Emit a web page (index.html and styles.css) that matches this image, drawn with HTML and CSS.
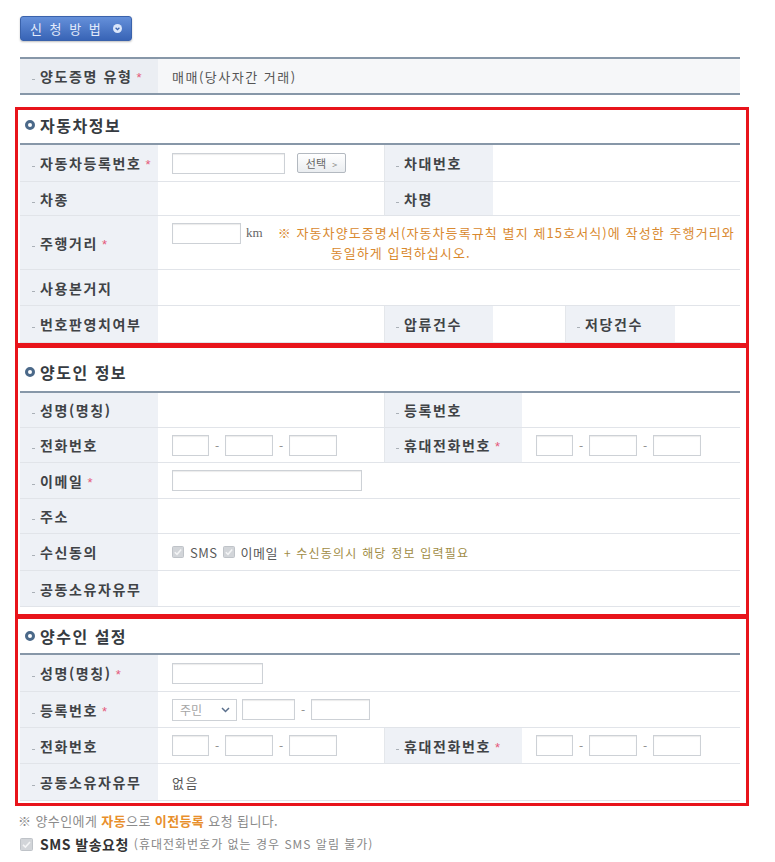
FILE: index.html
```
<!DOCTYPE html>
<html lang="ko">
<head>
<meta charset="utf-8">
<title>양도증명 신청</title>
<link rel="stylesheet" href="styles.css">
</head>
<body>
<div class="page">
  <div class="toolbar">
    <button type="button" class="method-btn">신 청 방 법<svg class="method-icon" width="9" height="9" viewBox="0 0 9 9"><circle cx="4.5" cy="4.5" r="4.5" fill="#dbe6fa"/><path d="M2.6 3.7 L4.5 5.6 L6.4 3.7" fill="none" stroke="#3a64b0" stroke-width="1.3"/></svg></button>
  </div>

  <table class="form-table type-table">
    <colgroup><col class="c-lab"><col></colgroup>
    <tr><th><span class="dot"></span>양도증명 유형<em class="req">*</em></th><td class="val">매매(당사자간 거래)</td></tr>
  </table>

  <section class="red-box box-car">
    <h3 class="sec-title"><span class="ring"></span>자동차정보</h3>
    <table class="form-table">
      <colgroup><col class="c-lab"><col class="c-v1"><col class="c-l2s"><col class="c-v2s"><col class="c-l3"><col></colgroup>
      <tr class="h37">
        <th><span class="dot"></span>자동차등록번호<em class="req">*</em></th>
        <td><div class="field"><input type="text" class="inp w-carno"><button type="button" class="sel-btn">선택 <span class="gt">&gt;</span></button></div></td>
        <th class="sep"><span class="dot"></span>차대번호</th>
        <td colspan="3"></td>
      </tr>
      <tr class="h34">
        <th><span class="dot"></span>차종</th>
        <td></td>
        <th class="sep"><span class="dot"></span>차명</th>
        <td colspan="3"></td>
      </tr>
      <tr class="h54">
        <th><span class="dot"></span>주행거리<em class="req">*</em></th>
        <td colspan="5"><div class="field top"><input type="text" class="inp w-km"><span class="km">km</span><span class="km-note">※ 자동차양도증명서(자동차등록규칙 별지 제15호서식)에 작성한 주행거리와<span class="l2">동일하게 입력하십시오.</span></span></div></td>
      </tr>
      <tr class="h36">
        <th><span class="dot"></span>사용본거지</th>
        <td colspan="5"></td>
      </tr>
      <tr class="h37">
        <th><span class="dot"></span>번호판영치여부</th>
        <td></td>
        <th class="sep"><span class="dot"></span>압류건수</th>
        <td></td>
        <th class="sep"><span class="dot"></span>저당건수</th>
        <td></td>
      </tr>
    </table>
  </section>

  <section class="red-box box-seller">
    <h3 class="sec-title"><span class="ring"></span>양도인 정보</h3>
    <table class="form-table">
      <colgroup><col class="c-lab"><col class="c-v1"><col class="c-lab"><col></colgroup>
      <tr class="h35">
        <th><span class="dot"></span>성명(명칭)</th>
        <td></td>
        <th class="sep"><span class="dot"></span>등록번호</th>
        <td></td>
      </tr>
      <tr class="h35">
        <th><span class="dot"></span>전화번호</th>
        <td><div class="field"><input type="text" class="inp w-t1"><span class="dash">-</span><input type="text" class="inp w-t2"><span class="dash">-</span><input type="text" class="inp w-t3"></div></td>
        <th class="sep"><span class="dot"></span>휴대전화번호<em class="req">*</em></th>
        <td><div class="field"><input type="text" class="inp w-t1"><span class="dash">-</span><input type="text" class="inp w-t2"><span class="dash">-</span><input type="text" class="inp w-t3"></div></td>
      </tr>
      <tr class="h36">
        <th><span class="dot"></span>이메일<em class="req">*</em></th>
        <td colspan="3"><div class="field"><input type="text" class="inp w-mail"></div></td>
      </tr>
      <tr class="h35">
        <th><span class="dot"></span>주소</th>
        <td colspan="3"></td>
      </tr>
      <tr class="h37">
        <th><span class="dot"></span>수신동의</th>
        <td colspan="3"><div class="field agree">
          <svg class="chk" width="12" height="12" viewBox="0 0 12 12"><rect x=".5" y=".5" width="11" height="11" rx="1" fill="#d2d5d9" stroke="#bfc3c8"/><path d="M2.8 6.2 L5 8.3 L9.2 3.6" fill="none" stroke="#f4f5f6" stroke-width="1.5"/></svg><span class="opt">SMS</span>
          <svg class="chk" width="12" height="12" viewBox="0 0 12 12"><rect x=".5" y=".5" width="11" height="11" rx="1" fill="#d2d5d9" stroke="#bfc3c8"/><path d="M2.8 6.2 L5 8.3 L9.2 3.6" fill="none" stroke="#f4f5f6" stroke-width="1.5"/></svg><span class="opt">이메일</span>
          <span class="agree-note">+ 수신동의시 해당 정보 입력필요</span>
        </div></td>
      </tr>
      <tr class="h36">
        <th><span class="dot"></span>공동소유자유무</th>
        <td colspan="3"></td>
      </tr>
    </table>
  </section>

  <section class="red-box box-buyer">
    <h3 class="sec-title"><span class="ring"></span>양수인 설정</h3>
    <table class="form-table">
      <colgroup><col class="c-lab"><col class="c-v1"><col class="c-lab"><col></colgroup>
      <tr class="h37">
        <th><span class="dot"></span>성명(명칭)<em class="req">*</em></th>
        <td colspan="3"><div class="field"><input type="text" class="inp w-name"></div></td>
      </tr>
      <tr class="h36">
        <th><span class="dot"></span>등록번호<em class="req">*</em></th>
        <td colspan="3"><div class="field">
          <span class="sel-wrap"><select class="sel"><option>주민</option></select><svg class="sel-arrow" width="9" height="6" viewBox="0 0 9 6"><path d="M1 1 L4.5 4.5 L8 1" fill="none" stroke="#5a6f8c" stroke-width="1.5"/></svg></span><input type="text" class="inp w-r1"><span class="dash">-</span><input type="text" class="inp w-r2">
        </div></td>
      </tr>
      <tr class="h36">
        <th><span class="dot"></span>전화번호</th>
        <td><div class="field"><input type="text" class="inp w-t1"><span class="dash">-</span><input type="text" class="inp w-t2"><span class="dash">-</span><input type="text" class="inp w-t3"></div></td>
        <th class="sep"><span class="dot"></span>휴대전화번호<em class="req">*</em></th>
        <td><div class="field"><input type="text" class="inp w-t1"><span class="dash">-</span><input type="text" class="inp w-t2"><span class="dash">-</span><input type="text" class="inp w-t3"></div></td>
      </tr>
      <tr class="h37">
        <th><span class="dot"></span>공동소유자유무</th>
        <td colspan="3" class="val">없음</td>
      </tr>
    </table>
  </section>

  <p class="notice">※ 양수인에게 <b>자동</b>으로 <b>이전등록</b> 요청 됩니다.</p>
  <p class="sms-req"><svg class="chk" width="13" height="13" viewBox="0 0 13 13"><rect x=".5" y=".5" width="12" height="12" rx="1" fill="#d2d5d9" stroke="#bfc3c8"/><path d="M3 6.8 L5.4 9 L10 4" fill="none" stroke="#f4f5f6" stroke-width="1.6"/></svg><strong>SMS 발송요청</strong>(휴대전화번호가 없는 경우 SMS 알림 불가)</p>
</div>
</body>
</html>
```

FILE: styles.css
```
* { box-sizing: border-box; }
body {
  margin: 0;
  background: #fff;
  font-family: "Noto Sans CJK KR", "Noto Sans", sans-serif;
  color: #444;
}
.page { width: 775px; padding: 16px 0 0 15px; }

.toolbar { padding-left: 5px; height: 25px; }
.method-btn {
  display: flex;
  align-items: center;
  gap: 10px;
  width: 112px;
  height: 25px;
  padding: 0 0 0 9px;
  border: 1px solid #3a62ab;
  border-radius: 3px;
  background: linear-gradient(#6590da, #3864b6);
  color: #e3ebfb;
  font-family: "Noto Sans CJK KR", sans-serif;
  font-size: 13px;
  line-height: 1;
  letter-spacing: 2px;
  box-shadow: 0 1px 2px rgba(0, 0, 0, .25);
}
.method-icon { flex: none; }

.form-table {
  width: 720px;
  border-collapse: separate;
  border-spacing: 0;
  table-layout: fixed;
  border-top: 2px solid #8797a8;
}
.c-lab { width: 138px; }
.c-v1 { width: 226px; }
.c-l2s { width: 109px; }
.c-v2s { width: 72px; }
.c-l3 { width: 110px; }

.form-table th {
  background: #eef1f6;
  text-align: left;
  font-weight: 700;
  font-size: 14px;
  letter-spacing: 1.6px;
  color: #404346;
  padding: 0 0 0 11px;
  border-bottom: 1px solid #e1e4e9;
  white-space: nowrap;
}
.form-table th.sep { border-left: 1px solid #e4e7eb; padding-left: 10px; }
.form-table td {
  padding: 0 14px;
  border-bottom: 1px solid #e1e4e9;
  font-size: 13px;
  color: #555;
}
.form-table td.val { letter-spacing: 1.5px; }

.dot {
  display: inline-block;
  width: 3px;
  height: 1px;
  background: #aab0b7;
  vertical-align: middle;
  margin: 3px 5px 0 1px;
}
.req {
  font-style: normal;
  font-weight: 400;
  font-family: "Liberation Sans", sans-serif;
  font-size: 13px;
  color: #e4587a;
  margin-left: 4px;
  letter-spacing: 0;
}

.type-table {
  margin: 16px 0 0 5px;
  border-bottom: 2px solid #8797a8;
}
.type-table tr { height: 34px; }
.type-table th { border-bottom: 0; background: #ebeef3; }
.type-table td { border-bottom: 0; background: #f6f7f9; }

.h34 { height: 34px; }
.h35 { height: 35px; }
.h36 { height: 36px; }
.h37 { height: 37px; }
.h54 { height: 54px; }

.red-box {
  width: 734px;
  border: 3px solid #e8141b;
  padding: 0 6px 0 2px;
}
.box-car { margin-top: 12px; }
.box-seller { margin-top: -1px; padding-bottom: 7px; }
.box-buyer { margin-top: -1px; padding-bottom: 2px; }

.sec-title {
  margin: 0;
  display: flex;
  align-items: center;
  height: 33px;
  padding: 0 0 4px 5px;
  font-size: 16px;
  font-weight: 700;
  color: #363b41;
  letter-spacing: 1.5px;
}
.box-seller .sec-title { height: 43px; padding: 5px 0 0 5px; }
.box-buyer .sec-title { height: 34px; padding: 0 0 0 5px; }
.ring {
  flex: none;
  width: 10px;
  height: 10px;
  border: 3px solid #4b6989;
  border-radius: 50%;
  margin-right: 5px;
}

.field { display: flex; align-items: center; }
.field.top { align-items: flex-start; }

.inp {
  display: block;
  height: 21px;
  margin: 0;
  padding: 0 4px;
  border: 1px solid #cdd1d6;
  border-radius: 0;
  background: #fff;
  box-shadow: inset 0 1px 1px #ececec;
  font-size: 12px;
}
.w-carno { width: 113px; }
.w-km { width: 69px; }
.w-t1 { width: 37px; }
.w-t2 { width: 48px; }
.w-t3 { width: 48px; }
.w-mail { width: 190px; }
.w-name { width: 91px; }
.w-r1 { width: 53px; margin-left: 5px; }
.w-r2 { width: 59px; }

.dash {
  width: 16px;
  text-align: center;
  color: #8a8a8a;
  font-size: 12px;
}

.sel-btn {
  margin-left: 12px;
  width: 49px;
  height: 20px;
  padding: 0;
  border: 1px solid #b3b9c0;
  border-radius: 2px;
  background: linear-gradient(#ffffff, #eaedf0);
  color: #666;
  font-family: "Noto Sans CJK KR", sans-serif;
  font-size: 11px;
  line-height: 18px;
}
.sel-btn .gt { font-size: 9px; margin-left: 3px; color: #888; }

.km {
  margin-left: 5px;
  font-family: "Liberation Serif", serif;
  font-size: 13px;
  line-height: 20px;
  color: #666;
}
.km-note {
  margin-left: 15px;
  font-size: 13px;
  line-height: 20px;
  letter-spacing: 1.1px;
  color: #d9892f;
  white-space: nowrap;
}
.km-note .l2 { display: block; padding-left: 53px; }

.agree .chk { flex: none; }
.agree .opt { margin: 0 5px 0 6px; color: #5a5a5a; font-size: 13px; letter-spacing: .5px; }
.agree-note { margin-left: 1px; color: #a08c45; font-size: 12px; letter-spacing: 1.2px; }

.sel-wrap { position: relative; display: block; width: 65px; height: 22px; }
.sel {
  display: block;
  width: 65px;
  height: 22px;
  margin: 0;
  padding: 0 0 0 7px;
  border: 1px solid #cdd1d6;
  border-radius: 0;
  background: #fff;
  color: #a5a5a5;
  font-family: "Noto Sans CJK KR", sans-serif;
  font-size: 12px;
  -webkit-appearance: none;
  appearance: none;
}
.sel-arrow { position: absolute; right: 7px; top: 8px; pointer-events: none; }

.notice {
  margin: 6px 0 0 3px;
  font-size: 13px;
  line-height: 18px;
  letter-spacing: .4px;
  color: #8b8b8b;
}
.notice b { color: #e88f2c; }
.sms-req {
  display: flex;
  align-items: center;
  margin: 5px 0 0 5px;
  font-size: 12px;
  line-height: 18px;
  letter-spacing: 1px;
  color: #888;
}
.sms-req strong { font-size: 14px; color: #333; margin: 0 5px 0 7px; letter-spacing: .5px; }
```
